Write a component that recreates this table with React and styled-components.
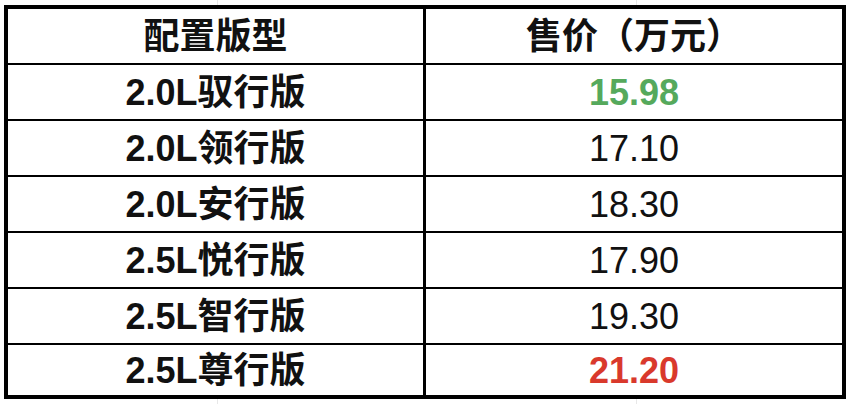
import React from "react";
import styled, { createGlobalStyle } from "styled-components";

const Global = createGlobalStyle`
  html, body { margin: 0; padding: 0; }
  body {
    width: 852px;
    height: 404px;
    overflow: hidden;
    background-color: #fff;
    background-image:
      linear-gradient(#e8e8e8, #e8e8e8),
      linear-gradient(#e8e8e8, #e8e8e8);
    background-size: 1px 404px, 1px 404px;
    background-position: 217px 0, 636px 0;
    background-repeat: no-repeat;
    font-family: "Liberation Sans", "Noto Sans CJK SC", sans-serif;
  }
`;

const Page = styled.div`
  padding: 5px 6px 5px 4px;
`;

const Table = styled.div`
  width: 842px;
  box-sizing: border-box;
  border: 4px solid #000;
  background: #000;
  display: grid;
  grid-template-columns: 415px 1fr;
  grid-template-rows: repeat(6, 54px) 50px;
  column-gap: 3px;
  row-gap: 2px;
`;

const Cell = styled.div`
  background: #fff;
  display: flex;
  align-items: center;
  justify-content: center;
  font-size: 36px;
  line-height: 1;
  font-weight: ${(p) => (p.$bold ? 700 : 400)};
  color: ${(p) => p.$color || "#111"};
  padding-top: 1px;
`;

const rows = [
  ["2.0L驭行版", "15.98", "#55a95c"],
  ["2.0L领行版", "17.10"],
  ["2.0L安行版", "18.30"],
  ["2.5L悦行版", "17.90"],
  ["2.5L智行版", "19.30"],
  ["2.5L尊行版", "21.20", "#d9392c"],
];

export default function App() {
  return (
    <>
      <Global />
      <Page>
        <Table>
          <Cell $bold>配置版型</Cell>
          <Cell $bold>售价（万元）</Cell>
          {rows.map(([name, price, color]) => (
            <React.Fragment key={name}>
              <Cell $bold>{name}</Cell>
              <Cell $bold={!!color} $color={color}>
                {price}
              </Cell>
            </React.Fragment>
          ))}
        </Table>
      </Page>
    </>
  );
}
